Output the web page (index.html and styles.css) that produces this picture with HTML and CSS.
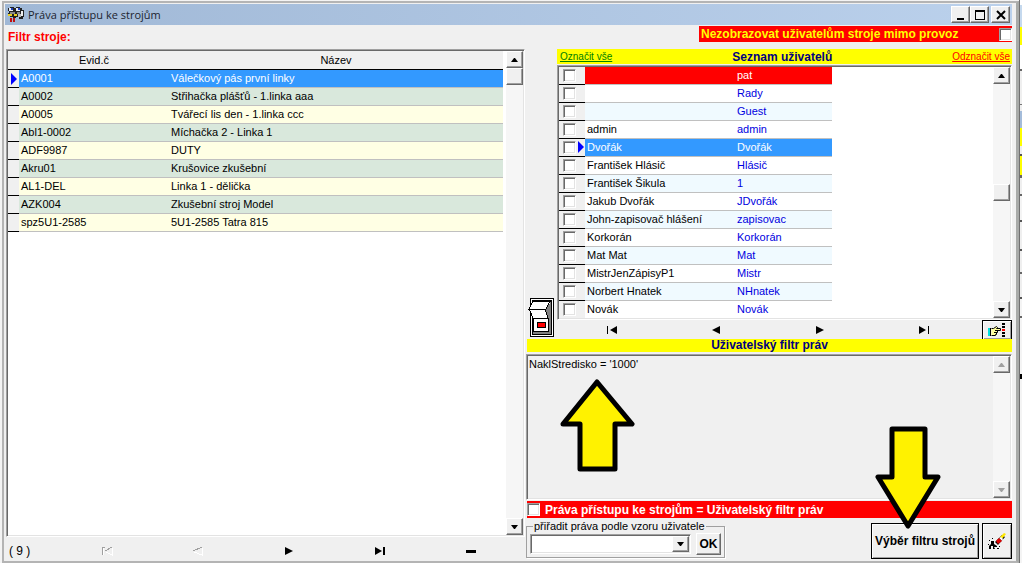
FILE: index.html
```html
<!DOCTYPE html>
<html lang="cs">
<head>
<meta charset="utf-8">
<title>Práva přístupu ke strojům</title>
<link rel="stylesheet" href="styles.css">
</head>
<body>
<div class="desktop">
<main class="window">
  <header class="titlebar">
    <svg class="app-icon" width="16" height="16" viewBox="0 0 16 16" shape-rendering="crispEdges"><path fill="#222" d="M2 0h4v1h2V0h4v1h2v2h2v7h-1v2h-4v-2H8v1H6v2H5v-3H2V9H0V6h1V4H0V1h2z"/><path fill="#e8eef8" d="M1 1h4v3H1zM8 1h4v3H8z"/><path fill="#2040c0" d="M3 1h2v2H3zM10 1h2v2h-2z"/><path fill="#888" d="M2 5h5v2H2zM9 5h3v2H9z"/><path fill="#e8d020" d="M0 7h4v2H0zM6 7h3v2H6z"/><path fill="#bbb" d="M10 7h3v3h-3z"/><path fill="#eee" d="M13 4h2v5h-2z"/><path fill="#c01010" d="M2 11h2v4H2zM5 11h2v4H5z"/></svg>
    <h1 class="title">Práva přístupu ke strojům</h1>
    <div class="win-buttons">
      <button class="bevel win-btn" aria-label="Minimalizovat"><svg width="14" height="12" viewBox="0 0 14 12"><path fill="#000" d="M3 9h7v2H3z"/></svg></button>
      <button class="bevel win-btn" aria-label="Maximalizovat"><svg width="14" height="12" viewBox="0 0 14 12"><path d="M2 1h10v10H2zM3 3v7h8V3z" fill="#000" fill-rule="evenodd"/></svg></button>
      <button class="bevel win-btn close" aria-label="Zavřít"><svg width="14" height="12" viewBox="0 0 14 12"><path d="M3 2l8 8M11 2l-8 8" stroke="#000" stroke-width="2"/></svg></button>
    </div>
  </header>
  <div class="content">
    <section class="machines">
      <div class="filter-label">Filtr stroje:</div>
      <div class="grid sunken">
        <div class="grid-view">
          <table class="table machine-table">
            <colgroup><col class="c-mark"><col class="c-main"><col></colgroup>
            <thead><tr><th></th><th>Evid.č</th><th>Název</th></tr></thead>
            <tbody>
              <tr class="selected"><td class="mark"><svg width="7" height="12" viewBox="0 0 7 12"><path d="M0 0l6 6-6 6z" fill="#00f"/></svg></td><td>A0001</td><td>Válečkový pás první linky</td></tr>
              <tr><td class="mark"></td><td>A0002</td><td>Střihačka plášťů - 1.linka aaa</td></tr>
              <tr><td class="mark"></td><td>A0005</td><td>Tvářecí lis den - 1.linka ccc</td></tr>
              <tr><td class="mark"></td><td>Abl1-0002</td><td>Míchačka 2 - Linka 1</td></tr>
              <tr><td class="mark"></td><td>ADF9987</td><td>DUTY</td></tr>
              <tr><td class="mark"></td><td>Akru01</td><td>Krušovice zkušební</td></tr>
              <tr><td class="mark"></td><td>AL1-DEL</td><td>Linka 1 - dělička</td></tr>
              <tr><td class="mark"></td><td>AZK004</td><td>Zkušební stroj Model</td></tr>
              <tr><td class="mark"></td><td>spz5U1-2585</td><td>5U1-2585 Tatra 815</td></tr>
            </tbody>
          </table>
        </div>
        <div class="scrollbar">
          <button class="bevel scroll-btn" aria-label="Nahoru"><svg width="7" height="4" viewBox="0 0 7 4"><path d="M0 4l3-4h1l3 4z"/></svg></button>
          <div class="bevel thumb"></div>
          <div class="track"></div>
          <button class="bevel scroll-btn" aria-label="Dolů"><svg width="7" height="4" viewBox="0 0 7 4"><path d="M0 0h7L4 4H3z"/></svg></button>
        </div>
      </div>
      <nav class="machine-nav">
        <span class="count">( 9 )</span>
        <div class="nav-buttons">
          <button disabled aria-label="První"><svg width="12" height="10" viewBox="0 0 12 10" shape-rendering="crispEdges"><path d="M1 9V1h3M11 1L4 5" stroke="#a0a0a0" fill="none"/><path d="M2 9V2M5 6l6 3V2" stroke="#fff" fill="none"/></svg></button>
          <button disabled aria-label="Předchozí"><svg width="12" height="10" viewBox="0 0 12 10" shape-rendering="crispEdges"><path d="M10 1L1 5" stroke="#a0a0a0" fill="none"/><path d="M2 6l8 3V2" stroke="#fff" fill="none"/></svg></button>
          <button aria-label="Další"><svg width="12" height="10" viewBox="0 0 12 10"><path d="M2 1l8 4-8 4z"/></svg></button>
          <button aria-label="Poslední"><svg width="12" height="10" viewBox="0 0 12 10"><path d="M1 1l7 4-7 4zM9 1h2v8H9z"/></svg></button>
          <button aria-label="Odebrat"><svg width="12" height="10" viewBox="0 0 12 10"><path d="M1 4h10v3H1z"/></svg></button>
        </div>
      </nav>
    </section>

    <section class="rights">
      <label class="hide-banner"><span>Nezobrazovat uživatelům stroje mimo provoz</span><input type="checkbox" class="check"></label>
      <div class="users">
        <button class="switch" aria-label="Přepnout"><svg width="27" height="39" viewBox="0 0 27 39" shape-rendering="crispEdges"><path fill="#000" d="M2 0h24v39H2z"/><path fill="#fff" d="M3 1h22v37H3z"/><path fill="#000" d="M4 2h20v35H4z"/><path fill="#fff" d="M5 3h17v31H5z"/><path fill="#808080" d="M18 12l5-9v33H5l1-3h14V20z"/><path fill="#fff" stroke="#000" d="M5 3h17l-4 8H1zM1 11h16l3 9H5z"/><path stroke="#000" fill="#fff" d="M5 20h15v13H5z"/><path d="M9 24h9v6H9z"/><path fill="#f00" d="M10 25h7v4h-7z"/></svg></button>
        <div class="user-panel">
          <div class="user-head"><a class="mark-all" href="#">Označit vše</a><h2>Seznam uživatelů</h2><a class="unmark-all" href="#">Odznačit vše</a></div>
          <div class="user-grid sunken">
            <div class="grid-view">
              <table class="table user-table">
                <colgroup><col class="c-check"><col class="c-main"><col class="c-login"></colgroup>
                <tbody>
                  <tr class="red"><td class="mark"><input type="checkbox" class="check" aria-label="pat"></td><td></td><td>pat</td></tr>
                  <tr><td class="mark"><input type="checkbox" class="check" aria-label="Rady"></td><td></td><td>Rady</td></tr>
                  <tr><td class="mark"><input type="checkbox" class="check" aria-label="Guest"></td><td></td><td>Guest</td></tr>
                  <tr><td class="mark"><input type="checkbox" class="check" aria-label="admin"></td><td>admin</td><td>admin</td></tr>
                  <tr class="selected"><td class="mark"><input type="checkbox" class="check" aria-label="Dvořák"><svg width="7" height="12" viewBox="0 0 7 12"><path d="M0 0l6 6-6 6z" fill="#00f"/></svg></td><td>Dvořák</td><td>Dvořák</td></tr>
                  <tr><td class="mark"><input type="checkbox" class="check" aria-label="Hlásič"></td><td>František Hlásič</td><td>Hlásič</td></tr>
                  <tr><td class="mark"><input type="checkbox" class="check" aria-label="1"></td><td>František Šikula</td><td>1</td></tr>
                  <tr><td class="mark"><input type="checkbox" class="check" aria-label="JDvořák"></td><td>Jakub Dvořák</td><td>JDvořák</td></tr>
                  <tr><td class="mark"><input type="checkbox" class="check" aria-label="zapisovac"></td><td>John-zapisovač hlášení</td><td>zapisovac</td></tr>
                  <tr><td class="mark"><input type="checkbox" class="check" aria-label="Korkorán"></td><td>Korkorán</td><td>Korkorán</td></tr>
                  <tr><td class="mark"><input type="checkbox" class="check" aria-label="Mat"></td><td>Mat Mat</td><td>Mat</td></tr>
                  <tr><td class="mark"><input type="checkbox" class="check" aria-label="Mistr"></td><td>MistrJenZápisyP1</td><td>Mistr</td></tr>
                  <tr><td class="mark"><input type="checkbox" class="check" aria-label="NHnatek"></td><td>Norbert Hnatek</td><td>NHnatek</td></tr>
                  <tr><td class="mark"><input type="checkbox" class="check" aria-label="Novák"></td><td>Novák</td><td>Novák</td></tr>
                </tbody>
              </table>
            </div>
            <div class="scrollbar">
              <button class="bevel scroll-btn" aria-label="Nahoru"><svg width="7" height="4" viewBox="0 0 7 4"><path d="M0 4l3-4h1l3 4z"/></svg></button>
              <div class="track"></div>
              <div class="bevel thumb"></div>
              <div class="track"></div>
              <button class="bevel scroll-btn" aria-label="Dolů"><svg width="7" height="4" viewBox="0 0 7 4"><path d="M0 0h7L4 4H3z"/></svg></button>
            </div>
          </div>
          <nav class="user-nav">
            <div class="nav-buttons">
              <button aria-label="První"><svg width="12" height="10" viewBox="0 0 12 10"><path d="M1 1h1v8H1zM11 1L4 5l7 4z"/></svg></button>
              <button aria-label="Předchozí"><svg width="12" height="10" viewBox="0 0 12 10"><path d="M10 1L2 5l8 4z"/></svg></button>
              <button aria-label="Další"><svg width="12" height="10" viewBox="0 0 12 10"><path d="M2 1l8 4-8 4z"/></svg></button>
              <button aria-label="Poslední"><svg width="12" height="10" viewBox="0 0 12 10"><path d="M1 1l7 4-7 4zM10 1h1v8h-1z"/></svg></button>
            </div>
            <button class="framed hand" aria-label="Vybrat"><svg width="18" height="14" viewBox="0 0 18 14"><path fill="#00e0e0" d="M0 5h2v8H0z"/><path d="M2 5h1v8H2z"/><path fill="#ffff9c" stroke="#000" d="M3.500 5.500L5.500 5.500L8.500 3.500L9.500 4.500L8.500 5.500H12.500V7.500H9.500V9.500H8.500V11.500H7.500V12.500H3.500"/><path stroke="#000" d="M7 7.500h3M6 9.500h3"/><path d="M14 0h3v2h-3zM14 3h3v2h-3zM14 9h3v2h-3zM14 12h3v2h-3z"/><path fill="#f00" d="M14 6h3v2h-3z"/></svg></button>
          </nav>
        </div>
      </div>
      <h2 class="filter-title">Uživatelský filtr práv</h2>
      <div class="memo sunken">
        <textarea class="memo-text" readonly aria-label="Uživatelský filtr práv">NaklStredisko = '1000'</textarea>
        <div class="scrollbar off">
          <button class="bevel scroll-btn" disabled aria-label="Nahoru"><svg width="7" height="4" viewBox="0 0 7 4"><path d="M0 4l3-4h1l3 4z"/></svg></button>
          <div class="track"></div>
          <button class="bevel scroll-btn" disabled aria-label="Dolů"><svg width="7" height="4" viewBox="0 0 7 4"><path d="M0 0h7L4 4H3z"/></svg></button>
        </div>
        <svg class="arrow-up" width="76" height="98" viewBox="0 0 76 98"><path d="M38 6L73 48H56V93H21V48H4Z"/></svg>
      </div>
      <label class="equal-banner"><input type="checkbox" class="check"><span>Práva přístupu ke strojům = Uživatelský filtr práv</span></label>
      <footer class="actions">
        <fieldset class="pattern">
          <legend><label for="pattern">přiřadit práva podle vzoru uživatele</label></legend>
          <div class="combo sunken"><select id="pattern"><option></option></select><span class="bevel drop"><svg width="7" height="4" viewBox="0 0 7 4"><path d="M0 0h7L4 4H3z"/></svg></span></div>
          <button class="bevel ok">OK</button>
        </fieldset>
        <div class="big-buttons">
          <button class="framed choose">Výběr filtru strojů</button>
          <button class="framed erase" aria-label="Vymazat"><svg width="18" height="17" viewBox="0 0 18 17"><path d="M7 9l7-7 3 2-7 8z" fill="#000"/><path d="M12 4l4-4 2 1-4 5z" fill="#ffe800"/><path d="M11 5l2-1 2 2-1 2z" fill="#fff"/><path d="M8 8l3-3 3 3-4 3z" fill="#e00000"/><path d="M3 8h3v3l3 2v1H6l1 2H5v-3H3v3H1v-3l2-2z" fill="#000"/><path d="M1 7h1v1H1zM4 5h1v1H4zM9 15h2v1H9zM0 11h1v1H0zM11 13h1v1h-1z"/></svg></button>
        </div>
        <svg class="arrow-down" width="68" height="106" viewBox="0 0 68 106"><path d="M18 4H51V52H64L34 101L4 52H18Z"/></svg>
      </footer>
    </section>
  </div>
</main>
<div class="behind"></div>
</div>
</body>
</html>
```
FILE: styles.css
```css
* { box-sizing: border-box; }
body { margin: 0; font: 11px/14px "Liberation Sans", Arial, sans-serif; color: #000; background: #f4f4f4; }
button { font: inherit; color: inherit; padding: 0; margin: 0; border: 0; background: none; display: flex; align-items: center; justify-content: center; }
svg { display: block; flex: none; }
h1, h2 { margin: 0; font-size: 11px; }

.desktop { display: flex; min-height: 100vh; padding: 1px 0 0 2px; }
.window { flex: 1; min-width: 0; display: flex; flex-direction: column; background: #f0f0f0; border: 2px solid #b4b4b4; border-right-width: 3px; border-right-color: #a8aaa8; padding: 1px 0 0 1px; }
.behind { width: 3px; flex: none; margin-top: -1px; border-left: 1px solid #707070;
  background: linear-gradient(#fff 0 5px, #c5d9ee 5px 27px, #ff0 27px 45px, #fff 45px 69px, #666 69px 71px, #efefef 71px 104px, #777 104px 105px, #efefef 105px 111px, #a4bcda 111px 128px, #ff0 128px 146px, #efefef 146px 154px, #555 154px 156px, #ff0 156px 175px, #666 175px 178px, #efefef 178px 194px, #666 194px 196px, #f4f4f4 196px 220px, #555 220px 222px, #efefef 222px 249px, #555 249px 251px, #efefef 251px 272px, #666 272px 274px, #efefef 274px 297px, #555 297px 299px, #f4f4f4 299px 316px, #666 316px 318px, #f4f4f4 318px 374px, #000 374px 379px, #f4f4f4 379px); }

.titlebar { display: flex; align-items: center; height: 21px; margin-right: 4px; padding: 0 2px 0 3px; background: linear-gradient(90deg, #a0b8d6, #bbd1ec); }
.title { flex: 1; margin-left: 4px; font: 11px/18px "Open Sans", "Noto Sans", sans-serif; color: #1c2430; }
.win-buttons { display: flex; }
.bevel { background: #f0f0f0; border: 1px solid; border-color: #fff #696969 #696969 #fff; box-shadow: inset -1px -1px #a0a0a0; }
.win-btn { width: 19px; height: 17px; }
.close { margin-left: 2px; }

.content { flex: 1; display: grid; grid-template-columns: minmax(0, 519fr) minmax(0, 486fr); gap: 1px; padding: 1px 4px 1px 1px; }
.machines, .rights { display: flex; flex-direction: column; min-width: 0; }
.filter-label { height: 23px; padding-left: 2px; line-height: 22px; font-weight: bold; font-size: 12px; color: #f00; }
.sunken { border: 1px solid; border-color: #a0a0a0 #fff #fff #a0a0a0; box-shadow: inset 1px 1px #696969, inset -1px -1px #e3e3e3; padding: 1px; }
.grid { flex: 1; display: flex; background: #fff; }
.grid-view { flex: 1; min-width: 0; padding-right: 3px; overflow: hidden; }
.table { border-collapse: separate; border-spacing: 0; table-layout: fixed; width: 100%; }
.c-mark { width: 11px; }
.c-check { width: 26px; }
.c-main { width: 150px; }
.c-login { width: 97px; }
.table th { height: 19px; padding: 0; font-weight: normal; background: #f0f0f0; border-bottom: 1px solid #000; }
.table td { height: 18px; padding: 0 0 0 2px; line-height: 17px; white-space: nowrap; border-bottom: 1px solid #c0c0c0; }
.machine-table tbody tr:nth-child(odd) { background: #ffffe4; }
.machine-table tbody tr:nth-child(even) { background: #d9e8dc; }
.table td.mark { background: #f0f0f0; border-bottom-color: #000; padding-left: 3px; }
.table tbody tr.selected { background: #3399ff; }
.table tbody tr.selected td { color: #fff; }
.user-table { width: 273px; }
.user-table tr:nth-child(odd) { background: #f0faff; }
.user-table tr:nth-child(even) { background: #fff; }
.user-table tr:nth-child(even) td:last-child, .user-table tr:nth-child(odd) td:last-child { color: #0000e0; }
.user-table tbody tr.red { background: #f00; }
.user-table tbody tr.red td:last-child, .user-table tbody tr.selected td:last-child { color: #fff; }
.user-table td.mark { padding-left: 4px; }
.user-table .mark > * { display: inline-block; vertical-align: top; margin-top: 2px; }
.user-table .mark svg { margin-left: 2px; }
.check { appearance: none; flex: none; width: 13px; height: 13px; margin: 0; background: #fff; border: 1px solid; border-color: #a0a0a0 #fff #fff #a0a0a0; box-shadow: inset 1px 1px #696969, inset -1px -1px #e3e3e3; }

.scrollbar { flex: none; width: 17px; display: flex; flex-direction: column; }
.scroll-btn { height: 17px; flex: none; }
.thumb { height: 17px; flex: none; }
.track { flex: 1; background: #f6f6f6; }
.off svg { fill: #a0a0a0; }

.machine-nav { display: flex; align-items: center; height: 23px; padding: 4px 9px 0 3px; }
.count { width: 53px; font-size: 12px; }
.nav-buttons { flex: 1; display: flex; justify-content: space-around; }

.hide-banner { align-self: flex-end; width: 313px; height: 16px; display: flex; justify-content: space-between; align-items: center; padding-left: 2px; background: #f00; color: #ff0; font-weight: bold; font-size: 12px; }
.users { display: grid; grid-template-columns: 30px minmax(0, 1fr); margin-top: 7px; gap: 1px; }
.switch { align-self: end; justify-content: flex-start; padding: 0 0 2px 2px; }
.user-head { display: flex; align-items: center; justify-content: space-between; height: 15px; padding: 0 2px 0 3px; margin-bottom: 1px; background: #ff0; }
.user-head h2, .filter-title { font-size: 12px; color: #000080; }
.user-head a { font-size: 10px; }
.mark-all { color: #008000; }
.unmark-all { color: #f00; }
.user-grid { display: flex; height: 255px; background: #fff; }
.user-grid .grid-view { padding: 0; }
.user-nav { display: flex; height: 19px; align-items: center; padding-left: 3px; gap: 6px; }
.framed { background: #f0f0f0; border: 1px solid #000; box-shadow: inset 1px 1px #fff, inset -1px -1px #a0a0a0; }
.hand { width: 30px; height: 20px; }

.filter-title { height: 13px; line-height: 13px; margin-left: 1px; text-align: center; background: #ff0; }
.memo { position: relative; flex: 1; display: flex; margin-top: 2px; }
.memo-text { flex: 1; min-width: 0; resize: none; border: 0; padding: 1px 0 0 1px; margin: 0; background: #f0f0f0; font: inherit; color: #000; outline: 0; overflow: hidden; }
.arrow-up, .arrow-down { position: absolute; fill: #fff200; stroke: #000; stroke-width: 5; stroke-linejoin: round; pointer-events: none; }
.arrow-up { left: 32px; top: 21px; }
.equal-banner { display: flex; align-items: center; gap: 5px; height: 17px; margin: 1px 0 0 1px; background: #f00; color: #fff; font-weight: bold; font-size: 11px; }

.actions { position: relative; display: flex; justify-content: space-between; align-items: flex-start; height: 42px; padding-top: 2px; }
.pattern { display: flex; align-items: center; gap: 5px; width: 199px; height: 38px; margin: 0; padding: 0 3px 2px; border: 1px solid #a0a0a0; box-shadow: 1px 1px #fff; }
.pattern legend { padding: 0 1px; margin-left: 3px; line-height: 12px; }
.combo { position: relative; flex: 1; height: 20px; display: flex; background: #fff; }
.combo select { flex: 1; min-width: 0; appearance: none; border: 0; background: transparent; padding: 0; font: inherit; }
.drop { width: 17px; display: flex; align-items: center; justify-content: center; pointer-events: none; }
.ok { width: 25px; height: 22px; font-weight: bold; font-size: 12px; }
.big-buttons { display: flex; gap: 3px; padding-top: 3px; }
.choose { width: 108px; height: 36px; font-weight: bold; font-size: 12px; }
.erase { width: 30px; height: 36px; }
.arrow-down { right: 70px; bottom: 29px; }
.equal-banner { font-size: 12px; }
```
